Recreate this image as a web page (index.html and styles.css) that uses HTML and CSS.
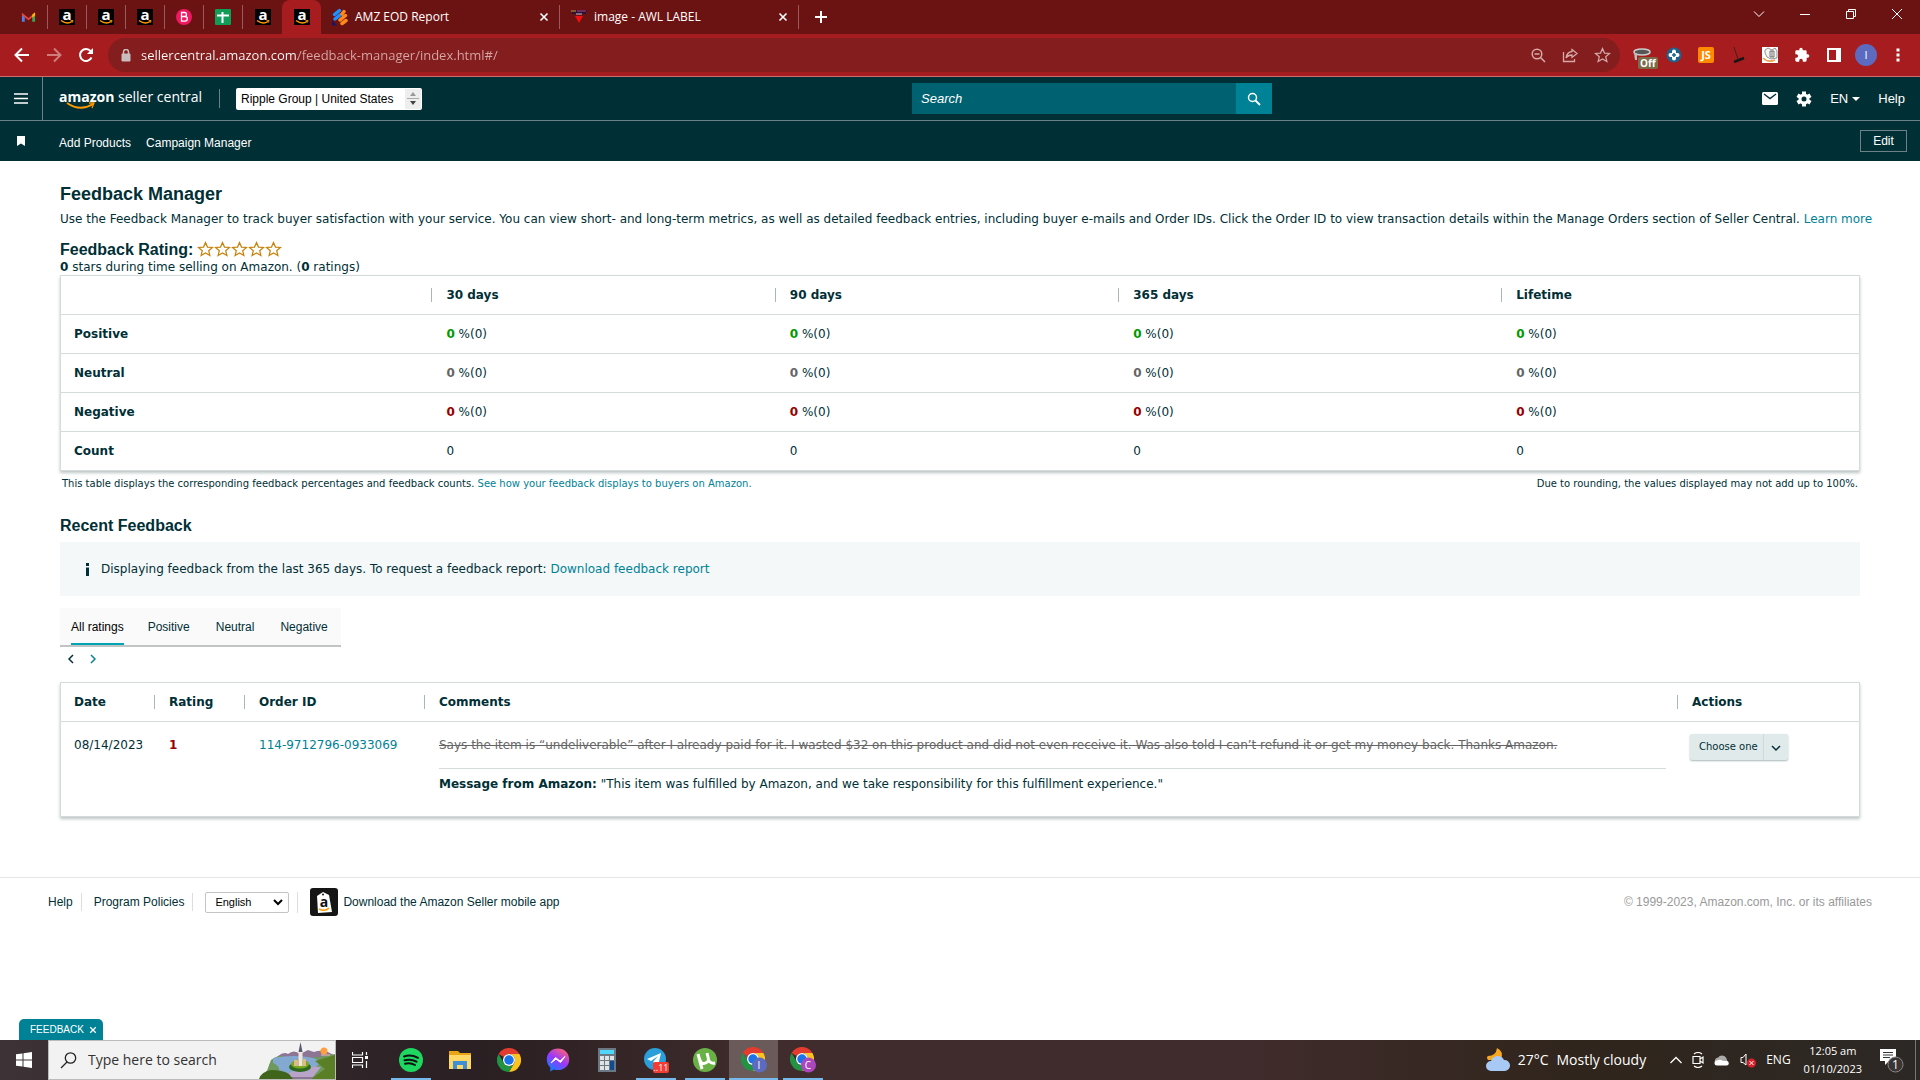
FILE: index.html
```html
<!DOCTYPE html>
<html lang="en">
<head>
<meta charset="utf-8">
<title>Feedback Manager</title>
<link rel="stylesheet" href="styles.css">
</head>
<body>
<svg class="sprite" aria-hidden="true">
  <symbol id="amazon" viewBox="0 0 16 16"><rect width="16" height="16" fill="#000"/><text x="8" y="11" text-anchor="middle" font-family="Open Sans" font-weight="700" font-size="15" fill="#fff">a</text><path d="M2 11.500Q8 16 13 12.500" fill="none" stroke="#f90" stroke-width="1.500"/><path d="M11.500 11.800l2.500-.3-.5 2" fill="none" stroke="#f90"/></symbol>
  <symbol id="chrome" viewBox="0 0 48 48"><path d="M3.200 12A24 24 0 0 1 44.800 12H24A12 12 0 0 0 13.600 18Z" fill="#e33b2e"/><path d="M44.800 12A24 24 0 0 1 24 48L34.400 30A12 12 0 0 0 24 12Z" fill="#fcc31e"/><path d="M3.200 12A24 24 0 0 0 24 48L34.400 30A12 12 0 0 1 13.600 30Z" fill="#229342"/><circle cx="24" cy="24" r="12" fill="#fff"/><circle cx="24" cy="24" r="9.500" fill="#1a73e8"/></symbol>
  <symbol id="cross" viewBox="0 0 10 10"><path d="M1.500 1.500l7 7M8.500 1.500l-7 7" fill="none" stroke="currentColor" stroke-width="1.600"/></symbol>
  <symbol id="star" viewBox="0 0 17 16"><path d="M8.500 1.500l2 4.600 5 .4-3.800 3.200 1.200 4.800-4.400-2.600-4.400 2.600 1.200-4.800L1.500 6.500l5-.4z" fill="none" stroke="currentColor" stroke-width="1.200"/></symbol>
</svg>

<nav class="tabstrip" aria-label="Browser tabs">
  <div class="pinned"><svg viewBox="0 0 16 12" width="15" height="12"><path d="M1 11V2l3 2v7z" fill="#4285f4"/><path d="M15 11V2l-3 2v7z" fill="#34a853"/><path d="M1 1.500L8 7l7-5.500V4L8 9.500 1 4z" fill="#ea4335"/><path d="M12 3.300L15 1v3.500l-3 2.300z" fill="#fbbc04"/></svg></div>
  <div class="pinned"><svg width="16" height="16"><use href="#amazon"/></svg></div>
  <div class="pinned"><svg width="16" height="16"><use href="#amazon"/></svg></div>
  <div class="pinned"><svg width="16" height="16"><use href="#amazon"/></svg></div>
  <div class="pinned"><svg width="16" height="16" viewBox="0 0 16 16"><circle cx="8" cy="8" r="8" fill="#f01860"/><path d="M5.500 3.500h3a2 2 0 0 1 0 4h-3zm0 4H9a2.300 2.300 0 0 1 0 4.700H5.500z" fill="none" stroke="#fff" stroke-width="1.300"/></svg></div>
  <div class="pinned"><svg width="16" height="16" viewBox="0 0 16 16"><rect width="16" height="16" rx="1" fill="#0f9d58"/><path d="M7.500 3v11M2 6.500h12" stroke="#fff" stroke-width="2"/></svg></div>
  <div class="pinned last"><svg width="16" height="16"><use href="#amazon"/></svg></div>
  <div class="pinned active"><svg width="16" height="16"><use href="#amazon"/></svg></div>
  <div class="tab"><svg width="16" height="18" viewBox="0 0 16 18"><path d="M2.500 6.500L7.500 2.500M3 11L8 7" stroke="#1e90ff" stroke-width="3.500" stroke-linecap="round"/><path d="M10 6l2-2.500M8 12l5.500-4.500M10 15.500l4-3" stroke="#ff8a1c" stroke-width="3.500" stroke-linecap="round"/><path d="M0 12l5 5.500H0z" fill="#1b1464"/></svg><span>AMZ EOD Report</span><button aria-label="Close tab"><svg width="10" height="10"><use href="#cross"/></svg></button></div>
  <div class="tab"><svg width="16" height="14" viewBox="0 0 16 14"><path d="M0 1h16M1 3h14" stroke="#2a1430" stroke-width="2"/><path d="M0 1h5" stroke="#e59a30"/><path d="M6 1h9" stroke="#c23a8d"/><path d="M5 4h6" stroke="#c9c0e8"/><path d="M4 6h8l-4 7z" fill="#f20d10"/></svg><span>image - AWL LABEL</span><button aria-label="Close tab"><svg width="10" height="10"><use href="#cross"/></svg></button></div>
  <button class="newtab" aria-label="New tab"><svg width="12" height="12" viewBox="0 0 12 12"><path d="M6 0v12M0 6h12" stroke="#fff" stroke-width="2"/></svg></button>
  <div class="wincontrols">
    <button aria-label="Search tabs"><svg width="12" height="12" viewBox="0 0 12 12"><path d="M1 3.500l5 5 5-5" fill="none" stroke="#fff"/></svg></button>
    <button aria-label="Minimise"><svg width="12" height="12" viewBox="0 0 12 12"><path d="M1 6.500h10" stroke="#fff"/></svg></button>
    <button aria-label="Restore"><svg width="12" height="12" viewBox="0 0 12 12"><path d="M1.500 3.500h7v7h-7zM3.500 3V1.500h7v7H9" fill="none" stroke="#fff"/></svg></button>
    <button aria-label="Close"><svg width="12" height="12" viewBox="0 0 12 12"><path d="M1 1l10 10M11 1L1 11" stroke="#fff"/></svg></button>
  </div>
</nav>

<div class="toolbar">
  <div class="navbtns">
    <button aria-label="Back"><svg width="16" height="16" viewBox="0 0 16 16"><path d="M15 8H2M8 1.500L1.500 8 8 14.500" fill="none" stroke="#fff" stroke-width="2"/></svg></button>
    <button aria-label="Forward"><svg width="16" height="16" viewBox="0 0 16 16"><path d="M1 8h13M8 1.500L14.500 8 8 14.500" fill="none" stroke="#cf7c7c" stroke-width="2"/></svg></button>
    <button aria-label="Reload"><svg width="16" height="16" viewBox="0 0 16 16"><path d="M13.500 10.500a6 6 0 1 1-.8-6.300" fill="none" stroke="#fff" stroke-width="2"/><path d="M15 1v6H9z" fill="#fff"/></svg></button>
  </div>
  <div class="address">
    <svg width="10" height="13" viewBox="0 0 10 13"><path d="M1 5h8v7H1z" fill="#c9bcbc" stroke="#c9bcbc"/><path d="M2.500 5V3a2.500 2.500 0 0 1 5 0v2" fill="none" stroke="#c9bcbc" stroke-width="1.500"/></svg>
    <input type="text" aria-label="Address" value="sellercentral.amazon.com/feedback-manager/index.html#/">
    <button aria-label="Zoom"><svg width="15" height="15" viewBox="0 0 15 15"><circle cx="6" cy="6" r="4.800" fill="none" stroke="#d6a9a9" stroke-width="1.500"/><path d="M3.500 6h5M9.500 9.500l4.500 4.500" stroke="#d6a9a9" stroke-width="1.500"/></svg></button>
    <button aria-label="Share"><svg width="16" height="15" viewBox="0 0 16 15"><path d="M1.500 4v9.500h11V11" fill="none" stroke="#d6a9a9" stroke-width="1.300"/><path d="M10 1.500l5 4-5 4V7q-4 0-6 3 1-6 6-6.500z" fill="none" stroke="#d6a9a9" stroke-width="1.300"/></svg></button>
    <button class="bookmark" aria-label="Bookmark"><svg width="17" height="16"><use href="#star"/></svg></button>
  </div>
  <div class="extensions">
    <button class="badged" aria-label="Pause extension"><svg width="18" height="16" viewBox="0 0 18 16"><ellipse cx="9" cy="5" rx="8" ry="3" fill="#555" stroke="#ccc" stroke-width="1.500"/><path d="M1 6h3v7H2z" fill="#bbb"/></svg><span>Off</span></button>
    <button aria-label="Add extension"><svg width="16" height="16" viewBox="0 0 16 16"><circle cx="8" cy="8" r="7.500" fill="#1d628c"/><path d="M8 4.500v7M4.500 8h7" stroke="#fff" stroke-width="4" stroke-linecap="round"/><path d="M8 6v4M6 8h4" stroke="#1d628c" stroke-width="1.500"/></svg></button>
    <button class="js" aria-label="Script extension">JS</button>
    <button aria-label="Broom extension"><svg width="16" height="16" viewBox="0 0 16 16"><path d="M4 0l4 12" stroke="#4a1c1c" stroke-width="1"/><path d="M4 15l10-4" stroke="#151515" stroke-width="2.500"/></svg></button>
    <button aria-label="Box extension"><svg width="16" height="16" viewBox="0 0 16 16"><rect width="16" height="16" fill="#fff"/><path d="M3 3l3-2 4 2 3-2 2 3v7l-6 1-4-2-2-4z" fill="#f4f4f4" stroke="#777" stroke-width=".8"/><path d="M8 4h4v6H8zM10 4v6" fill="none" stroke="#555" stroke-width=".8"/><path d="M1 11q5 5 12 2" fill="none" stroke="#f0a050" stroke-width="1.500"/></svg></button>
    <button aria-label="Extensions"><svg width="16" height="16" viewBox="0 0 24 24"><path d="M20.500 11H19V7a2 2 0 0 0-2-2h-4V3.500a2.500 2.500 0 0 0-5 0V5H4a2 2 0 0 0-2 2v3.800h1.500a2.700 2.700 0 0 1 0 5.400H2V20c0 1.100.9 2 2 2h3.800v-1.500a2.700 2.700 0 0 1 5.400 0V22H17a2 2 0 0 0 2-2v-4h1.500a2.500 2.500 0 0 0 0-5z" fill="#fff"/></svg></button>
    <button aria-label="Side panel"><svg width="14" height="14" viewBox="0 0 14 14"><path d="M1 1h12v12H1z" fill="none" stroke="#fff" stroke-width="2"/><path d="M9 0h5v14H9z" fill="#fff"/></svg></button>
    <button class="profile" aria-label="Profile">I</button>
    <button aria-label="Menu"><svg width="4" height="14" viewBox="0 0 4 14"><path d="M2 .5v3M2 5.500v3M2 10.500v3" stroke="#fff" stroke-width="3"/></svg></button>
  </div>
</div>

<header class="siteheader">
  <div class="left">
    <button class="burger" aria-label="Open menu"><svg width="14" height="11" viewBox="0 0 14 11"><path d="M0 1h14M0 5.500h14M0 10h14" stroke="#fff" stroke-width="1.500"/></svg></button>
    <a class="logo" href="#"><b>amazon</b> seller central<svg width="30" height="8" viewBox="0 0 30 8"><path d="M1 1q13 9 26 1" fill="none" stroke="#f90" stroke-width="1.800"/><path d="M23 1h5l-2 5" fill="none" stroke="#f90" stroke-width="1.300"/></svg></a>
    <div class="dropdown account">
      <select aria-label="Account and marketplace"><option>Ripple Group | United States</option></select>
      <svg width="16" height="20" viewBox="0 0 16 20"><path d="M0 0h16v20H0z" fill="#eee"/><path d="M5 7l3-4 3 4z" fill="#999"/><path d="M2 9.500h12" stroke="#aaa"/><path d="M5 12l3 4 3-4z" fill="#444"/></svg>
    </div>
  </div>
  <form class="search">
    <input type="text" aria-label="Search" placeholder="Search">
    <button type="button" aria-label="Search"><svg width="14" height="14" viewBox="0 0 14 14"><circle cx="5.500" cy="5.500" r="4" fill="none" stroke="#fff" stroke-width="1.500"/><path d="M8.500 8.500l4.500 4.500" stroke="#fff" stroke-width="1.800"/></svg></button>
  </form>
  <div class="right">
    <a href="#" aria-label="Messages"><svg width="16" height="13" viewBox="0 0 16 13"><rect width="16" height="13" rx="1.500" fill="#fff"/><path d="M2 2l6 4.500L14 2" fill="none" stroke="#002f36" stroke-width="1.400"/></svg></a>
    <a href="#" aria-label="Settings"><svg width="16" height="16" viewBox="0 0 16 16"><path d="M8 .5v15M1.500 4.200l13 7.600M14.500 4.200l-13 7.600" stroke="#fff" stroke-width="4"/><circle cx="8" cy="8" r="4" fill="#002f36" stroke="#fff" stroke-width="3"/></svg></a>
    <a class="lang" href="#">EN <svg width="8" height="4" viewBox="0 0 8 4"><path d="M0 0h8L4 4z" fill="#fff"/></svg></a>
    <a href="#">Help</a>
  </div>
</header>
<nav class="favbar" aria-label="Favourites">
  <svg width="8" height="10" viewBox="0 0 8 10"><path d="M0 0h8v10L4 7.500 0 10z" fill="#fff"/></svg>
  <a href="#">Add Products</a>
  <a href="#">Campaign Manager</a>
  <button>Edit</button>
</nav>

<main>
  <h1>Feedback Manager</h1>
  <p class="intro">Use the Feedback Manager to track buyer satisfaction with your service. You can view short- and long-term metrics, as well as detailed feedback entries, including buyer e-mails and Order IDs. Click the Order ID to view transaction details within the Manage Orders section of Seller Central. <a href="#">Learn more</a></p>
  <h2 class="rating">Feedback Rating: <span class="stars"><svg width="17" height="16"><use href="#star"/></svg><svg width="17" height="16"><use href="#star"/></svg><svg width="17" height="16"><use href="#star"/></svg><svg width="17" height="16"><use href="#star"/></svg><svg width="17" height="16"><use href="#star"/></svg></span></h2>
  <p class="summary"><b>0</b> stars during time selling on Amazon. (<b>0</b> ratings)</p>
  <table class="metrics">
    <colgroup><col class="m-name"><col class="m-days"><col class="m-days"><col class="m-year"><col></colgroup>
    <thead><tr><td></td><th scope="col">30 days</th><th scope="col">90 days</th><th scope="col">365 days</th><th scope="col">Lifetime</th></tr></thead>
    <tbody>
      <tr class="pos"><th scope="row">Positive</th><td><b>0</b> %(0)</td><td><b>0</b> %(0)</td><td><b>0</b> %(0)</td><td><b>0</b> %(0)</td></tr>
      <tr class="neu"><th scope="row">Neutral</th><td><b>0</b> %(0)</td><td><b>0</b> %(0)</td><td><b>0</b> %(0)</td><td><b>0</b> %(0)</td></tr>
      <tr class="neg"><th scope="row">Negative</th><td><b>0</b> %(0)</td><td><b>0</b> %(0)</td><td><b>0</b> %(0)</td><td><b>0</b> %(0)</td></tr>
      <tr><th scope="row">Count</th><td>0</td><td>0</td><td>0</td><td>0</td></tr>
    </tbody>
  </table>
  <div class="notes"><span>This table displays the corresponding feedback percentages and feedback counts. <a href="#">See how your feedback displays to buyers on Amazon.</a></span><span>Due to rounding, the values displayed may not add up to 100%.</span></div>
  <h2 class="recent">Recent Feedback</h2>
  <div class="banner"><svg width="5" height="13" viewBox="0 0 5 13"><path d="M1 0h3v3H1zM1 4.500h3V13H1z" fill="#002f36"/></svg><span>Displaying feedback from the last 365 days. To request a feedback report: <a href="#">Download feedback report</a></span></div>
  <div class="filters" role="tablist">
    <button role="tab" aria-selected="true">All ratings</button>
    <button role="tab">Positive</button>
    <button role="tab">Neutral</button>
    <button role="tab">Negative</button>
  </div>
  <div class="pager">
    <button aria-label="Previous page"><svg width="6" height="10" viewBox="0 0 6 10"><path d="M5 1L1 5l4 4" fill="none" stroke="#002f36" stroke-width="1.500"/></svg></button>
    <button aria-label="Next page"><svg width="6" height="10" viewBox="0 0 6 10"><path d="M1 1l4 4-4 4" fill="none" stroke="#008296" stroke-width="1.500"/></svg></button>
  </div>
  <table class="entries">
    <colgroup><col class="e-date"><col class="e-rating"><col class="e-order"><col><col class="e-actions"></colgroup>
    <thead><tr><th scope="col">Date</th><th scope="col">Rating</th><th scope="col">Order ID</th><th scope="col">Comments</th><th scope="col">Actions</th></tr></thead>
    <tbody><tr>
      <td>08/14/2023</td><td class="score">1</td><td><a href="#">114-9712796-0933069</a></td>
      <td><p class="comment"><s>Says the item is “undeliverable” after I already paid for it. I wasted $32 on this product and did not even receive it. Was also told I can’t refund it or get my money back. Thanks Amazon.</s></p><p class="message"><b>Message from Amazon:</b> "This item was fulfilled by Amazon, and we take responsibility for this fulfillment experience."</p></td>
      <td class="actions"><div class="dropdown choose"><select aria-label="Action"><option>Choose one</option></select><svg width="25" height="26" viewBox="0 0 25 26"><path d="M.5 0v26" stroke="#cfd9d9"/><path d="M9 12l4 4 4-4" fill="none" stroke="#002f36" stroke-width="1.500"/></svg></div></td>
    </tr></tbody>
  </table>
</main>

<footer>
  <a href="#">Help</a>
  <a href="#">Program Policies</a>
  <div class="langwrap"><div class="dropdown english"><select aria-label="Language"><option>English</option></select><svg width="20" height="18" viewBox="0 0 20 18"><path d="M6 7l4 4 4-4" fill="none" stroke="#000" stroke-width="2"/></svg></div></div>
  <a class="app" href="#"><svg width="28" height="28" viewBox="0 0 28 28"><rect width="28" height="28" rx="3" fill="#151515"/><path d="M7 8l6-4 6 3 3 17-14 1z" fill="#fff"/><circle cx="13" cy="6.500" r="1" fill="#151515"/><text x="14" y="19" text-anchor="middle" font-family="Open Sans" font-weight="700" font-size="14" fill="#111">a</text><path d="M9 21q6 3 10-1" fill="none" stroke="#f90" stroke-width="1.500"/></svg>Download the Amazon Seller mobile app</a>
  <span class="copy">© 1999-2023, Amazon.com, Inc. or its affiliates</span>
</footer>

<div class="feedback"><button>FEEDBACK</button><button aria-label="Close feedback"><svg width="8" height="8"><use href="#cross"/></svg></button></div>

<div class="taskbar">
  <button class="start" aria-label="Start"><svg width="16" height="16" viewBox="0 0 16 16"><path d="M0 2.300L6.500 1.400v6.100H0zM7.500 1.200L16 0v7.500H7.500zM0 8.500h6.500v6.100L0 13.700zM7.500 8.500H16V16l-8.500-1.200z" fill="#fff"/></svg></button>
  <label class="tasksearch">
    <svg width="17" height="17" viewBox="0 0 17 17"><circle cx="10.500" cy="6" r="5.200" fill="none" stroke="#222" stroke-width="1.300"/><path d="M7 10l-6 6" stroke="#222" stroke-width="1.300"/></svg>
    <input type="text" aria-label="Type here to search" placeholder="Type here to search">
    <svg width="76" height="38" viewBox="0 0 76 38"><path d="M10 24L19 15q6-5 10-2 6-5 12 0l8-4 6 2q10-4 21 4v24H10z" fill="#8d7695"/><path d="M12 19q8-6 14-3l10 2 24-2 16-3v22H6z" fill="#6d9a5c"/><path d="M14 17Q36 13 54 17q8 2 6 6l-14 13H18Q24 26 14 22z" fill="#83a9d2"/><path d="M30 32q12-8 32-6l-8 10H26z" fill="#b7a4c8"/><ellipse cx="41" cy="26" rx="11" ry="5" fill="#2d6a1f"/><ellipse cx="41" cy="23" rx="9" ry="4.500" fill="#79a81f"/><path d="M39.500 25V10h4v15z" fill="#f1e6dc"/><path d="M39.500 11l2-10 2 10z" fill="#555a6e"/><path d="M35 19h4v6h-4zM44 18h3v7h-3z" fill="#dfb98e"/><path d="M56 20l20-6v24H52l14-10z" fill="#5b7f26"/><path d="M0 38q2-7 12-9 12 0 18 4l4 5z" fill="#40641c"/><circle cx="65" cy="10" r="3.500" fill="#ff9f3d"/><path d="M62 14h9" stroke="#f3bfa4" stroke-width="1"/></svg>
  </label>
  <div class="apps">
    <button class="taskview" aria-label="Task view"><svg width="16" height="16" viewBox="0 0 16 16"><path d="M.5 0v3h10V0M.5 16v-3h10v3M.5 5.500h10v5H.5zM14.500 0v3M14.500 9v7" fill="none" stroke="#fff" stroke-width="1.200"/><path d="M13 4h3v3h-3z" fill="#fff"/></svg></button>
    <button class="running" aria-label="Spotify"><svg width="24" height="24" viewBox="0 0 24 24"><circle cx="12" cy="12" r="12" fill="#1ed760"/><path d="M5 8.500q7-2.300 14 1.300M5.500 12.300q6.500-1.800 12 1.400M6 15.800q5.500-1.400 10 1.200" fill="none" stroke="#111" stroke-width="2" stroke-linecap="round"/></svg></button>
    <button aria-label="File Explorer"><svg width="22" height="18" viewBox="0 0 22 18"><path d="M0 0h9l2 2h11v16H0z" fill="#e8a317"/><path d="M0 4h22v14H0z" fill="#ffd766"/><path d="M4 18v-8h14v8h-4v-4H8v4z" fill="#3f8fd6"/></svg></button>
    <button aria-label="Chrome"><svg width="24" height="24"><use href="#chrome"/></svg></button>
    <button aria-label="Messenger"><svg width="24" height="24" viewBox="0 0 24 24"><defs><linearGradient id="mg" x1=".2" y1="1" x2=".8" y2="0"><stop offset="0" stop-color="#0a84ff"/><stop offset=".5" stop-color="#9a36ff"/><stop offset="1" stop-color="#ff6470"/></linearGradient></defs><path d="M12 .5C5.500.5.800 5.200.800 11.500c0 3.300 1.300 6 3.500 8v4l3.500-2c1.300.4 2.700.6 4.200.6 6.500 0 11.200-4.500 11.200-10.600S18.500.5 12 .5z" fill="url(#mg)"/><path d="M5 15l4.500-5.500 4.500 3.500L19 8.500l-4.500 6-4.500-3.500z" fill="#fff" stroke="#fff" stroke-linejoin="round"/></svg></button>
    <button aria-label="Calculator"><svg width="18" height="24" viewBox="0 0 18 24"><path d="M0 0h18v24H0z" fill="#6b7782"/><path d="M2 2h14v4H2z" fill="#4fd7fb"/><path d="M2 8h4v4H2zM7 8h4v4H7zM12 8h4v4h-4zM2 13h4v4H2zM7 13h4v4H7zM2 18h4v4H2zM7 18h4v4H7z" fill="#dfe3e6"/><path d="M12 13h4v9h-4z" fill="#0f4b8f"/></svg></button>
    <button class="running" aria-label="Telegram"><svg width="26" height="26" viewBox="0 0 26 26"><circle cx="12" cy="12" r="11" fill="#2a9fd9"/><path d="M4 12l14-6-3 13-5-4 5-6-7 5z" fill="#fff"/><rect x="10" y="15" width="16" height="11" rx="2" fill="#f23c34"/><text x="18" y="24" text-anchor="middle" font-family="Open Sans" font-size="9" fill="#fff">..11</text></svg></button>
    <button class="running" aria-label="uTorrent"><svg width="24" height="24" viewBox="0 0 24 24"><circle cx="12" cy="12" r="12" fill="#69b144"/><path d="M5 6l4 15M6.500 11q2 6 6 4t3-4L14 5M15 11q2 5 7 4" fill="none" stroke="#fff" stroke-width="3"/></svg></button>
    <button class="running current" aria-label="Chrome profile I"><svg width="26" height="26" viewBox="0 0 26 26"><use href="#chrome" width="24" height="24"/><circle cx="18.500" cy="18" r="7.500" fill="#5c6bc0"/><text x="18" y="22" text-anchor="middle" font-family="Open Sans" font-size="10" fill="#fff">I</text></svg></button>
    <button class="running" aria-label="Chrome profile C"><svg width="26" height="26" viewBox="0 0 26 26"><use href="#chrome" width="24" height="24"/><circle cx="18.500" cy="18" r="7.500" fill="#ab47bc"/><text x="18" y="22" text-anchor="middle" font-family="Open Sans" font-size="10" fill="#fff">C</text></svg></button>
  </div>
  <div class="tray">
    <a class="weather" href="#"><svg width="24" height="24" viewBox="0 0 24 24"><path d="M11 0q7 3 4 12H2Q0 9 2 8q8 0 9-8z" fill="#f7a823"/><path d="M5 23a5 5 0 0 1 0-10 7 7 0 0 1 13-1 5.500 5.500 0 0 1 1 11z" fill="#a9c9f5"/></svg><span>27°C</span><span>Mostly cloudy</span></a>
    <button aria-label="Hidden icons"><svg width="12" height="8" viewBox="0 0 12 8"><path d="M.5 7L6 1.500 11.500 7" fill="none" stroke="#fff" stroke-width="1.300"/></svg></button>
    <button aria-label="Meet now"><svg width="12" height="16" viewBox="0 0 12 16"><path d="M1 4.500h7v7H1zM8 7l3-2v6L8 9M2 2q4-3 8 0M2 14q4 3 8 0" fill="none" stroke="#fff" stroke-width="1.200"/></svg></button>
    <button aria-label="OneDrive"><svg width="16" height="11" viewBox="0 0 16 11"><path d="M1 7A3.500 3.500 0 0 1 4 2.500a5 5 0 0 1 8 0l2 5z" fill="#aaa"/><path d="M3 10.500a2.500 2.500 0 0 1 0-5q3-1.500 6 .5h4a2.300 2.300 0 0 1 0 4.500z" fill="#fff"/></svg></button>
    <button aria-label="Volume muted"><svg width="16" height="15" viewBox="0 0 16 15"><path d="M1 4.500h2L6 1v11L3 9.500H1z" fill="none" stroke="#fff"/><circle cx="11.500" cy="10" r="4.500" fill="#d9202a"/><path d="M9.500 8l4 4M13.500 8l-4 4" stroke="#fff"/></svg></button>
    <span>ENG</span>
    <div class="clock"><span>12:05 am</span><span>01/10/2023</span></div>
    <button class="notify" aria-label="Notifications"><svg width="24" height="25" viewBox="0 0 24 25"><path d="M0 1h16v12H9l-4 4v-4H0z" fill="#fff"/><path d="M3 4.500h10M3 7h10M3 9.500h7" stroke="#333"/><circle cx="15.500" cy="16.500" r="7.500" fill="#3a3434" stroke="#888"/><text x="15.500" y="21" text-anchor="middle" font-family="Open Sans" font-size="12" fill="#fff">1</text></svg></button>
  </div>
</div>
</body>
</html>
```
FILE: styles.css
```css
* { box-sizing: border-box; }
body {
  margin: 0;
  min-height: 100vh;
  display: flex;
  flex-direction: column;
  background: #fff;
  color: #002f36;
  font: 12px/18px "DejaVu Sans", Verdana, sans-serif;
}
.sprite { display: none; }
svg { display: block; flex: none; }
button, input, select { font: inherit; color: inherit; border: 0; padding: 0; margin: 0; background: none; border-radius: 0; }
button { display: flex; align-items: center; justify-content: center; white-space: nowrap; cursor: pointer; }
input { min-width: 0; outline: 0; }
a { color: #008296; text-decoration: none; }
h1, h2, p { margin: 0; }
.dropdown { display: grid; align-items: center; }
.dropdown select { grid-area: 1 / 1; appearance: none; width: 100%; height: 100%; }
.dropdown svg { grid-area: 1 / 1; justify-self: end; pointer-events: none; }

/* Browser chrome */
.tabstrip, .toolbar, .taskbar { font-family: "Open Sans", "Noto Sans", sans-serif; color: #fff; }
.tabstrip { display: flex; align-items: center; height: 34px; padding-left: 9px; background: #6b1212; }
.pinned { display: flex; align-items: center; justify-content: center; width: 39px; height: 24px; border-right: 1px solid #985a5a; }
.pinned.last { border-right: 0; }
.pinned.active { height: 34px; border: 0; border-radius: 8px 8px 0 0; background: #a71d1f; }
.tab { display: flex; align-items: center; gap: 7px; width: 239px; height: 24px; padding: 0 10px 0 11px; border-right: 1px solid #985a5a; }
.tab span { flex: 1; }
.newtab { width: 44px; height: 34px; }
.wincontrols { display: flex; align-self: stretch; margin-left: auto; padding-bottom: 6px; }
.wincontrols button { width: 46px; }
.toolbar { display: flex; align-items: center; height: 43px; padding: 0 6px; background: #a71d1f; border-bottom: 1px solid #cf6d6d; }
.navbtns { display: flex; }
.navbtns button { width: 32px; height: 32px; }
.address { display: flex; align-items: center; flex: 1; height: 34px; margin-left: 6px; padding: 0 2px 0 13px; border-radius: 17px; background: #841d1d; font-size: 13px; }
.address input {
  flex: 1;
  margin-left: 10px;
  line-height: 20px;
  color: transparent;
  background: linear-gradient(90deg, #fff 157px, #d6a9a9 157px);
  background-clip: text;
}
.address button { width: 32px; height: 32px; }
.address .bookmark { color: #d6a9a9; }
.extensions { display: flex; align-items: center; margin-left: 6px; }
.extensions button { position: relative; width: 32px; height: 32px; }
.badged span { position: absolute; left: 12px; bottom: 2px; padding: 0 2px; border-radius: 2px; background: #7d6a48; font-size: 10px; line-height: 12px; font-weight: 700; }
.extensions .js { width: 16px; height: 16px; margin: 0 8px; border-radius: 2px; background: #ff8a00; font-size: 11px; font-weight: 700; }
.extensions .profile { width: 22px; height: 22px; margin: 0 5px; border-radius: 50%; background: #5c6bc0; font-size: 11px; }

/* Site header */
.siteheader, .favbar, footer, .filters, .feedback { font-family: "Liberation Sans", Arial, sans-serif; }
.siteheader { display: grid; grid-template-columns: 47.5% 360px 1fr; align-items: center; height: 44px; background: #002f36; border-bottom: 1px solid #6c8286; color: #fff; }
.siteheader a, .favbar a { color: #fff; }
.left { display: flex; align-items: center; align-self: stretch; }
.burger { width: 43px; align-self: stretch; border-right: 1px solid #6c8286; }
.logo { position: relative; margin-left: 16px; padding: 0 17px 3px 0; border-right: 1px solid #6c8286; font: 14px/16px "Open Sans", "Noto Sans", sans-serif; }
.logo svg { position: absolute; left: 7px; top: 13px; }
.account { width: 186px; height: 22px; margin-left: 16px; padding-right: 1px; border-radius: 2px; background: #fff; color: #000; }
.account select { padding-left: 5px; }
.search { display: flex; height: 31px; font-size: 13px; }
.search input { flex: 1; padding-left: 9px; background: #006170; font-style: italic; }
.search input::placeholder { color: #fff; }
.search button { width: 36px; background: #008296; }
.right { display: flex; align-items: center; justify-content: flex-end; gap: 18px; padding-right: 15px; font-size: 13px; }
.lang { display: flex; align-items: center; gap: 4px; }
.favbar { display: flex; align-items: center; height: 40px; padding: 0 13px 0 17px; background: #002f36; color: #fff; }
.favbar a { margin-right: 15px; padding-top: 3px; }
.favbar svg { margin-right: 34px; }
.favbar button { width: 47px; height: 22px; margin-left: auto; border: 1px solid #6c8286; }

/* Feedback manager */
main { padding: 21px 60px 0; }
h1, h2 { font-family: "Liberation Sans", Arial, sans-serif; font-weight: 700; }
h1 { font-size: 18px; line-height: 24px; }
.intro { margin: 4px -40px 0 0; }
h2 { font-size: 16px; line-height: 20px; }
.rating { display: flex; gap: 4px; margin-top: 13px; line-height: 18px; }
.stars { display: flex; align-items: flex-start; color: #c7820a; }
.summary { line-height: 16px; }
table { width: 100%; table-layout: fixed; border-collapse: separate; border-spacing: 0; border: 1px solid #d5dbdb; box-shadow: 0 2px 3px #bcc4c4; }
th, td { padding: 0 15px; text-align: left; vertical-align: middle; }
.metrics tr { height: 39px; }
.metrics thead tr { height: 38px; }
.metrics tbody th, .metrics tbody td, .entries tbody td { border-top: 1px solid #d5dbdb; }
thead th + th, thead td + th { background: linear-gradient(#a9b7b7, #a9b7b7) 0 12px / 1px 14px no-repeat; }
.metrics th:first-child, .entries th:first-child, .entries td:first-child { padding-left: 13px; }
.m-name { width: 20.6%; }
.m-days { width: 19.1%; }
.m-year { width: 21.3%; }
.pos b { color: #090; }
.neu b { color: #666; }
.neg b, .score { color: #900; }
.notes { display: flex; justify-content: space-between; margin-top: 4px; padding: 0 2px; font-size: 10px; }
.recent { margin-top: 23px; }
.banner { display: flex; align-items: center; gap: 11px; height: 54px; margin-top: 6px; padding-left: 25px; background: #f4f8f9; }
.filters { display: flex; gap: 22px; width: 281px; height: 39px; margin-top: 12px; padding: 0 11px; background: #fafafa; border-bottom: 2px solid #c0c4c4; }
.filters button { padding: 0 2px; }
.filters [aria-selected] { padding: 2px 0 0; border-bottom: 2px solid #00a4b4; color: #000; }
.pager { display: flex; gap: 16px; padding: 7px 8px; }
.entries { margin-top: 11px; }
.entries thead tr { height: 38px; }
.entries tbody td { height: 95px; padding-top: 14px; vertical-align: top; }
.entries .actions { padding: 12px 13px; }
.e-date { width: 93px; }
.e-rating { width: 90px; }
.e-order { width: 180px; }
.e-actions { width: 182px; }
.entries .score { font-weight: 700; }
.comment { padding-bottom: 14px; margin-right: -4px; border-bottom: 1px solid #d5dbdb; color: #666; }
.message { margin-top: 6px; }
.choose { width: 98px; height: 26px; border-radius: 2px; background: #e1eaea; box-shadow: 0 1px 2px #a9b7b7; font-size: 10px; }
.choose select { padding-left: 9px; }

/* Footer */
footer { display: flex; align-items: center; margin-top: 60px; padding: 10px 48px; border-top: 1px solid #e4e6e6; }
footer a { color: #002f36; }
footer > a:not(.app), .langwrap { margin-right: 12px; padding-right: 8px; border-right: 1px solid #ddd; }
.english { width: 84px; height: 21px; border: 1px solid #c4c4c4; border-radius: 2px; font-size: 11px; color: #000; }
.english select { padding-left: 9px; }
.app { display: flex; align-items: center; gap: 5px; }
.copy { margin-left: auto; color: #999; }
.feedback { display: flex; align-items: center; align-self: flex-start; gap: 5px; height: 21px; margin: auto 0 0 19px; padding: 0 6px 0 11px; border-radius: 5px 5px 0 0; background: #008296; color: #fff; font-size: 10px; }

/* Desktop taskbar */
.taskbar { display: flex; align-items: center; height: 40px; background: linear-gradient(90deg, #3d3336, #2a1f22 25%, #402c2c 40%, #402c2c 65%, #30251c 82%, #2c2825); }
.start { width: 48px; height: 40px; }
.tasksearch { display: flex; align-items: center; width: 288px; height: 40px; padding-left: 11px; border: 1px solid #bbb; background: #f2f2f2; color: #222; font-size: 14px; }
.tasksearch input { flex: 1; margin-left: 11px; }
.tasksearch input::placeholder { color: #333; }
.apps { display: flex; align-self: stretch; }
.apps button { width: 49px; }
.apps .taskview { width: 48px; margin-right: 2px; }
.running { background: linear-gradient(#76b9ed, #76b9ed) center bottom / 40px 2px no-repeat; }
.current { background-color: #6a5a5a; background-size: 49px 2px; }
.tray { display: flex; align-items: center; align-self: stretch; gap: 10px; margin-left: auto; margin-right: 4px; padding-right: 11px; border-right: 1px solid #777; }
.weather { display: flex; align-items: center; gap: 8px; margin-right: 14px; color: #fff; font-size: 14px; }
.clock { display: flex; flex-direction: column; align-items: center; margin-left: 3px; font-size: 11px; }
.notify { margin-left: 8px; }
```
